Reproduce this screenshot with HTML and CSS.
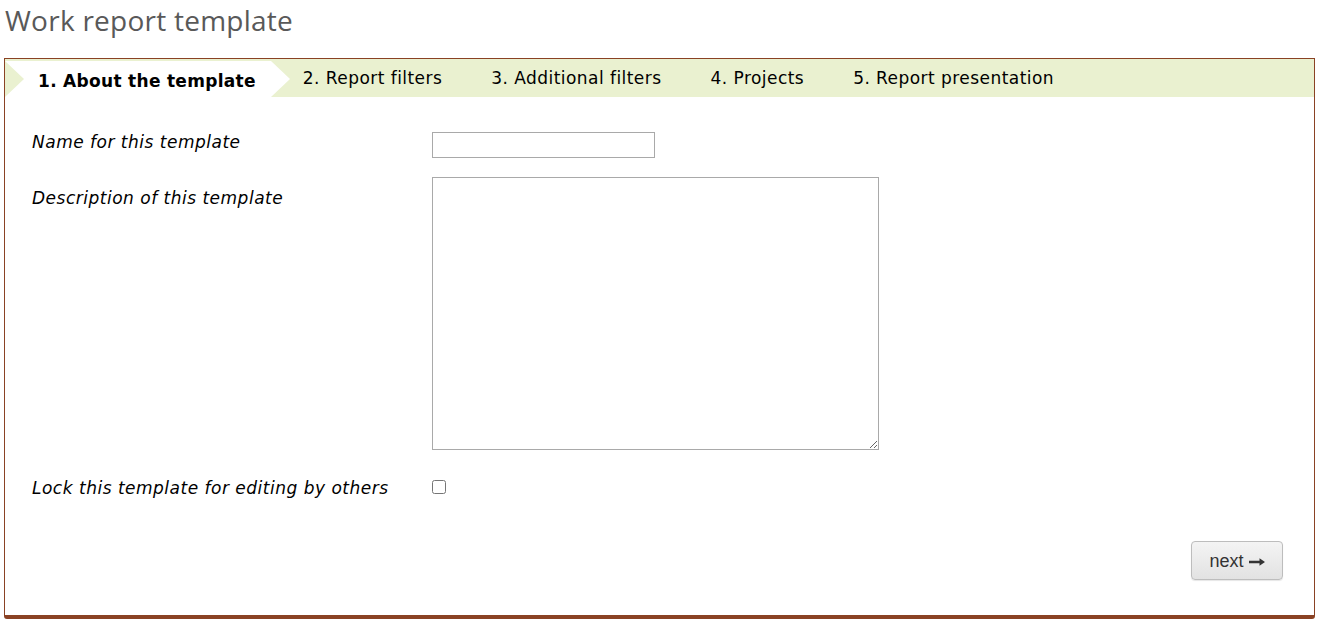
FILE: index.html
```html
<!DOCTYPE html>
<html lang="en">
<head>
<meta charset="utf-8">
<title>Work report template</title>
<link rel="stylesheet" href="styles.css">
</head>
<body>
<h1 class="page-title">Work report template</h1>
<div class="panel">
  <div class="tabs">
    <div class="tab tab-active">1. About the template</div>
    <div class="tab tab-first">2. Report filters</div>
    <div class="tab">3. Additional filters</div>
    <div class="tab">4. Projects</div>
    <div class="tab">5. Report presentation</div>
  </div>
  <form class="form">
    <div class="row row-name">
      <label class="label" for="tname">Name for this template</label>
      <input class="text-input" id="tname" type="text">
    </div>
    <div class="row row-desc">
      <label class="label label-desc" for="tdesc">Description of this template</label>
      <textarea class="text-area" id="tdesc"></textarea>
    </div>
    <div class="row row-lock">
      <label class="label" for="tlock">Lock this template for editing by others</label>
      <input class="check" id="tlock" type="checkbox">
    </div>
    <div class="actions">
      <button type="button" class="btn">next <svg class="arrow" width="16" height="10" viewBox="0 0 16 10"><path d="M0 3.8h10.5V1.2L16 5l-5.5 3.8V6.2H0z" fill="#333"/></svg></button>
    </div>
  </form>
</div>
</body>
</html>
```
FILE: styles.css
```css
html, body {
  margin: 0;
  padding: 0;
  background: #fff;
}
body {
  margin: 0 5px 0 4px;
}
.page-title {
  margin: 0 0 19px 0;
  padding: 1px 0 0 1px;
  font-family: "Open Sans", "Liberation Sans", sans-serif;
  font-weight: 400;
  font-size: 28px;
  letter-spacing: 0.25px;
  line-height: 38px;
  color: #595959;
}
.panel {
  border: 1px solid #8a4224;
  border-bottom-width: 4px;
  border-radius: 0 0 3px 3px;
  font-family: "DejaVu Sans", Verdana, sans-serif;
  color: #000;
}
.tabs {
  display: flex;
  height: 38px;
  background: #eaf1d0;
  align-items: center;
}
.tab {
  font-size: 17px;
  letter-spacing: 0.45px;
  padding: 0 24px 0 25px;
  white-space: nowrap;
}
.tab-active {
  position: relative;
  align-self: flex-end;
  height: 36px;
  box-sizing: border-box;
  background: #fff;
  font-weight: bold;
  letter-spacing: 0.3px;
  padding: 9px 15px 0 33px;
  line-height: 22px;
}
.tab-active::before {
  content: "";
  position: absolute;
  left: 0;
  top: 0;
  border-left: 19px solid #eaf1d0;
  border-top: 18px solid transparent;
  border-bottom: 18px solid transparent;
}
.tab-active::after {
  content: "";
  position: absolute;
  right: -19px;
  top: 0;
  border-left: 19px solid #fff;
  border-top: 18px solid transparent;
  border-bottom: 18px solid transparent;
}
.tab-first {
  margin-left: 7px;
}
.form {
  margin: 0;
  padding: 35px 31px 35px 27px;
}
.row {
  display: flex;
  align-items: flex-start;
}
.label {
  width: 400px;
  flex: none;
  font-style: italic;
  font-size: 17px;
  letter-spacing: 0.5px;
  line-height: 20px;
}
.row-desc {
  margin-top: 19px;
}
.label-desc {
  padding-top: 11px;
}
.row-lock {
  margin-top: 28px;
}
.text-input {
  width: 223px;
  height: 26px;
  box-sizing: border-box;
  border: 1px solid #a9a9a9;
  margin: 0;
  padding: 2px 4px;
}
.text-area {
  width: 447px;
  height: 273px;
  box-sizing: border-box;
  border: 1px solid #a9a9a9;
  margin: 0;
  padding: 2px;
}
.check {
  width: 14px;
  height: 14px;
  margin: 2px 0 0 0;
}
.actions {
  display: flex;
  justify-content: flex-end;
  margin-top: 43px;
}
.btn {
  display: flex;
  align-items: center;
  gap: 5px;
  height: 39px;
  width: 92px;
  box-sizing: border-box;
  justify-content: center;
  padding: 1px 12px 0;
  font-family: "Liberation Sans", Arial, sans-serif;
  font-size: 18px;
  color: #333;
  background: linear-gradient(#f4f4f4, #e2e2e2);
  border: 1px solid #bdbdbd;
  border-radius: 4px;
  box-shadow: 0 1px 1px rgba(0,0,0,0.1);
}
.arrow {
  display: block;
  margin-top: 1px;
}
```
